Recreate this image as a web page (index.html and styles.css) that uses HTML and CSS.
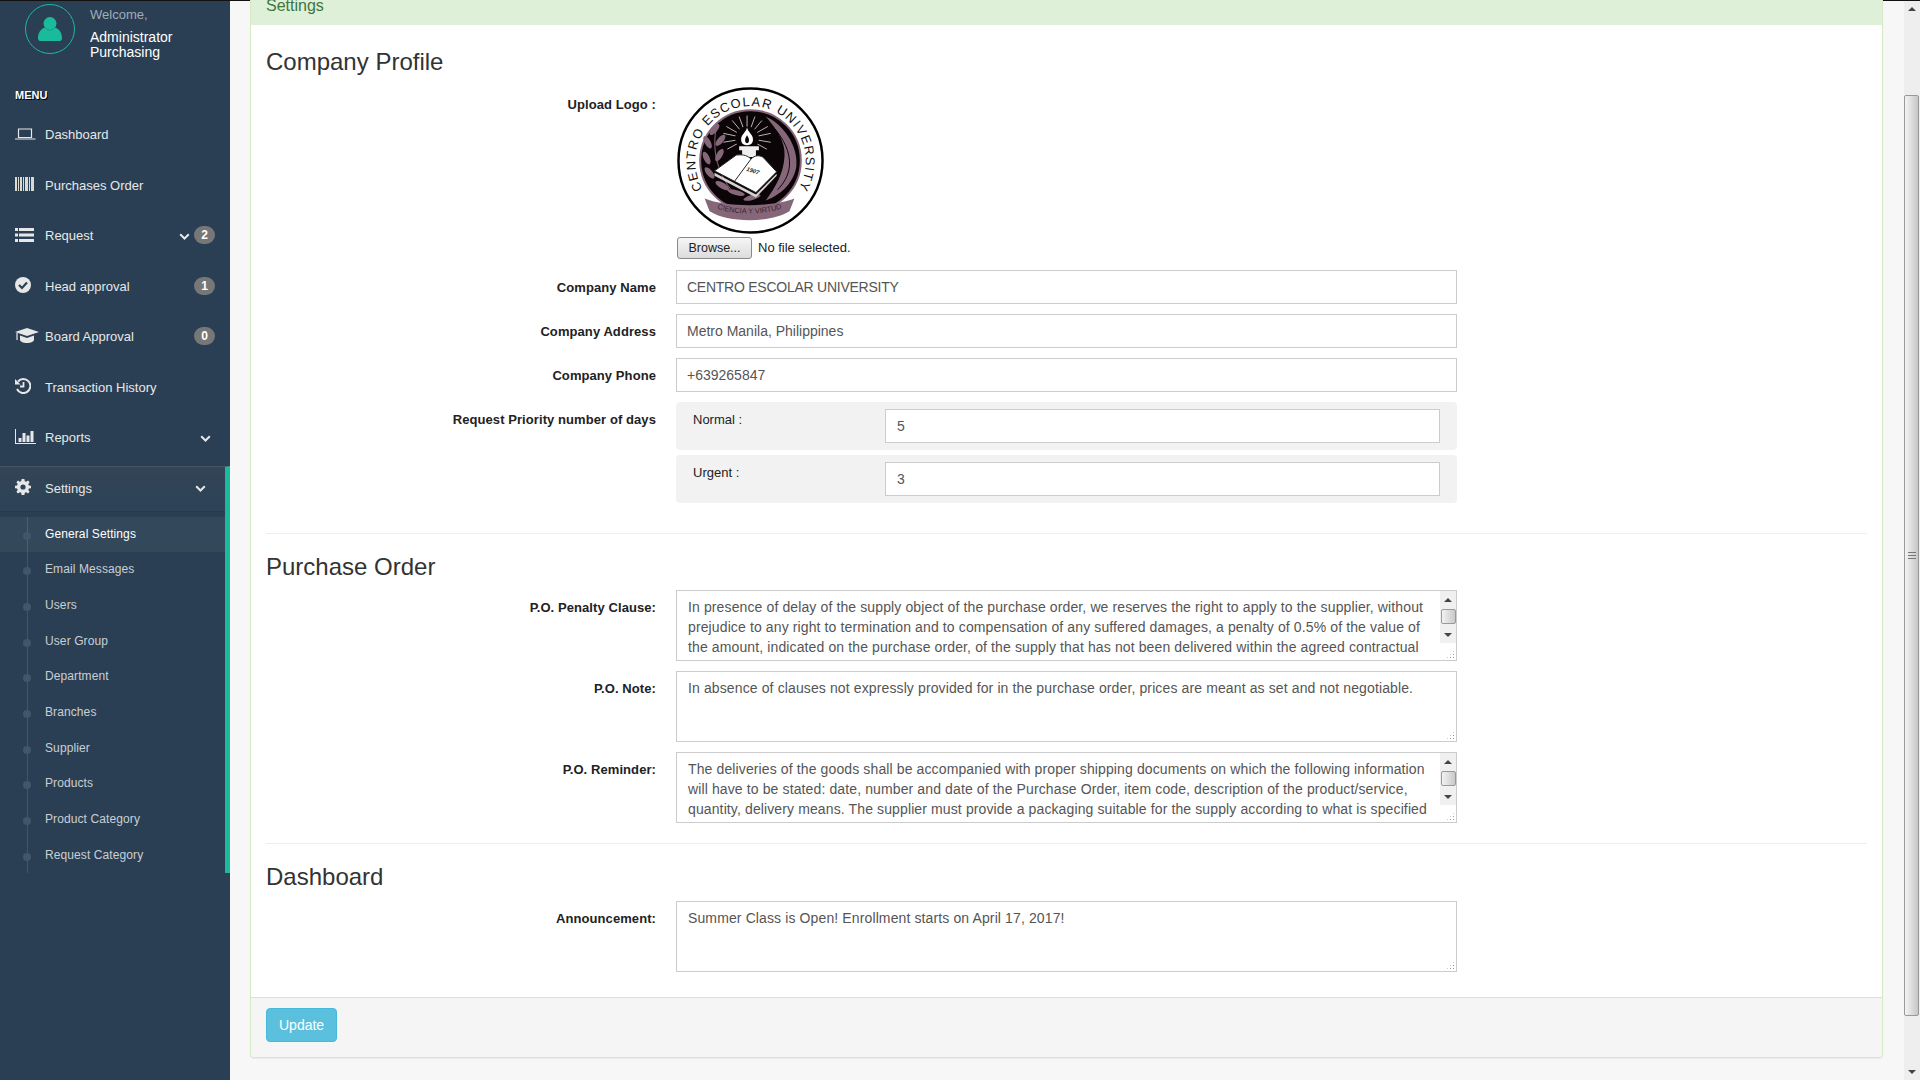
FILE: index.html
```html
<!DOCTYPE html>
<html lang="en">
<head>
	<meta charset="utf-8" />
	<title>General Settings</title>
	<link rel="stylesheet" href="styles.css">
</head>
<body>
<div class="page">

	<!-- left menu -->
	<aside class="sidebar">
		<div class="profile">
			<div class="avatar">
				<svg width="24" height="24" viewBox="0 0 24 24"><circle cx="12" cy="6.500" r="6.500" fill="#1ABB9C"/><path d="M0 21.500C0 16 2 12.500 7 10.500 10 14 14 14 17 10.500 22 12.500 24 16 24 21.500 24 23 23 24 22 24H2C1 24 0 23 0 21.500z" fill="#1ABB9C"/></svg>
			</div>
			<div class="profile-text">
				<span class="welcome">Welcome,</span>
				<h2>Administrator<br>Purchasing</h2>
			</div>
		</div>
		<h3 class="menu-title">MENU</h3>
		<ul class="nav">
			<li class="nav-row"><span class="nav-icon"><svg width="21" height="12" viewBox="0 0 21 12"><path d="M3.500 1h13v8.500h-13z" fill="none" stroke="#E7E7E7" stroke-width="1.200"/><path d="M0 10.500h20.500v1H0z" fill="#E7E7E7"/></svg></span>Dashboard</li>
			<li class="nav-row"><span class="nav-icon"><svg width="19" height="14" viewBox="0 0 19 14"><path d="M0 0h2v14H0zM3 0h1v14H3zM5 0h2v14H5zM8 0h1v14H8zM10 0h3v14h-3zM14 0h1v14h-1zM16 0h3v14h-3z" fill="#d9d9d0"/></svg></span>Purchases Order</li>
			<li class="nav-row"><span class="nav-icon"><svg width="19" height="14" viewBox="0 0 19 14"><path d="M0 0h3v3H0zM4 0h15v3H4zM0 5.500h3v3H0zM4 5.500h15v3H4zM0 11h3v3H0zM4 11h15v3H4z" fill="#E7E7E7"/></svg></span>Request
				<span class="nav-end"><svg class="chev" width="11" height="7" viewBox="0 0 11 7"><path d="M1.200 1.200 5.500 5.500 9.800 1.200" fill="none" stroke="#E7E7E7" stroke-width="2"/></svg><span class="badge">2</span></span></li>
			<li class="nav-row"><span class="nav-icon"><svg width="16" height="16" viewBox="0 0 16 16"><circle cx="8" cy="8" r="8" fill="#E7E7E7"/><path d="M4 8l3 3 5-5.500" fill="none" stroke="#2A3F54" stroke-width="2.200"/></svg></span>Head approval
				<span class="nav-end"><span class="badge">1</span></span></li>
			<li class="nav-row"><span class="nav-icon"><svg width="24" height="16" viewBox="0 0 24 16"><path d="M0 4 12 0l12 4-12 4z" fill="#E7E7E7"/><path d="M5 7.500 12 10l7-2.500v4.200C19 13.500 16 15 12 15s-7-1.500-7-3.300z" fill="#E7E7E7"/><path d="M2 5v7" stroke="#E7E7E7" stroke-width="1.200"/></svg></span>Board Approval
				<span class="nav-end"><span class="badge">0</span></span></li>
			<li class="nav-row"><span class="nav-icon"><svg width="16" height="16" viewBox="0 0 16 16"><path d="M3 3.500A7 7 0 1 1 2 11" fill="none" stroke="#E7E7E7" stroke-width="2"/><path d="M0 1v5.500h5.500z" fill="#E7E7E7"/><path d="M8.500 4v4.500H5" fill="none" stroke="#E7E7E7" stroke-width="1.800"/></svg></span>Transaction History</li>
			<li class="nav-row"><span class="nav-icon"><svg width="21" height="15" viewBox="0 0 21 15"><path d="M0 0h1v14h20v1H0z" fill="#E7E7E7"/><path d="M3.500 9h3v4h-3zM7.500 4h3v9h-3zM11.500 6.500h3V13h-3zM15.500 2h3v11h-3z" fill="#E7E7E7"/></svg></span>Reports
				<span class="nav-end chev-only"><svg class="chev" width="11" height="7" viewBox="0 0 11 7"><path d="M1.200 1.200 5.500 5.500 9.800 1.200" fill="none" stroke="#E7E7E7" stroke-width="2"/></svg></span></li>
			<li class="nav-active">
				<div class="nav-row active-head"><span class="nav-icon"><svg width="16" height="16" viewBox="0 0 16 16"><path d="M6.600 0h2.800l.4 2.200 1.400.6L13 1.500l1.600 1.700-1.300 1.800.6 1.400L16 6.800v2.400l-2.100.4-.6 1.400 1.300 1.800-1.600 1.700-1.800-1.300-1.400.6-.4 2.200H6.600l-.4-2.200-1.400-.6L3 14.500l-1.600-1.700 1.300-1.800-.6-1.400L0 9.200V6.800l2.100-.4.600-1.400-1.300-1.800L3 1.500l1.800 1.300 1.400-.6z" fill="#E7E7E7"/><circle cx="8" cy="8" r="2.600" fill="#2f4255"/></svg></span>Settings
					<span class="nav-end chev-active"><svg class="chev" width="11" height="7" viewBox="0 0 11 7"><path d="M1.200 1.200 5.500 5.500 9.800 1.200" fill="none" stroke="#E7E7E7" stroke-width="2"/></svg></span></div>
				<ul class="child-menu">
					<li class="current">General Settings</li>
					<li>Email Messages</li>
					<li>Users</li>
					<li>User Group</li>
					<li>Department</li>
					<li>Branches</li>
					<li>Supplier</li>
					<li>Products</li>
					<li>Product Category</li>
					<li>Request Category</li>
				</ul>
			</li>
		</ul>
	</aside>

	<!-- settings panel -->
	<main class="content">
		<section class="panel">
			<div class="panel-heading">Settings</div>
			<div class="panel-body">
				<h3 class="section-title">Company Profile</h3>

				<div class="form-row logo-row">
					<label>Upload Logo :</label>
					<div>
						<svg class="logo" width="148" height="148" viewBox="0 0 150 150">
							<defs>
								<path id="sealArc" d="M27 105A56 56 0 1 1 122 105"/>
								<path id="ribbonArc" d="M33 120C55 131 91 131 114 120"/>
							</defs>
							<circle cx="74.500" cy="74.500" r="73" fill="#fff" stroke="#000" stroke-width="2.500"/>
							<text class="seal-text"><textPath href="#sealArc" startOffset="50%" text-anchor="middle">CENTRO ESCOLAR UNIVERSITY</textPath></text>
							<circle cx="74.500" cy="74.500" r="51" fill="#0b0507" stroke="#86677a" stroke-width="2"/>
							<!-- big leaf on the right -->
							<path d="M90 30C108 38 123 60 121 80 119 96 106 109 90 115 100 101 108 88 109 70 110 55 100 42 90 30z" fill="#86677a"/>
							<path d="M97 40C108 52 115 66 114 80 113 90 108 98 102 104" fill="none" stroke="#0b0507"/>
							<!-- laurel on the left -->
							<g fill="#86677a">
								<ellipse cx="38" cy="43" rx="7" ry="3" transform="rotate(-50 38 43)"/>
								<ellipse cx="31" cy="56" rx="7" ry="3" transform="rotate(60 31 56)"/>
								<ellipse cx="44" cy="54" rx="7" ry="3" transform="rotate(-50 44 54)"/>
								<ellipse cx="30" cy="72" rx="7" ry="3" transform="rotate(65 30 72)"/>
								<ellipse cx="43" cy="69" rx="7" ry="3" transform="rotate(-60 43 69)"/>
								<ellipse cx="33" cy="87" rx="7" ry="3" transform="rotate(50 33 87)"/>
								<ellipse cx="46" cy="100" rx="8" ry="3" transform="rotate(30 46 100)"/>
								<ellipse cx="60" cy="107" rx="9" ry="2.500" transform="rotate(15 60 107)"/>
								<ellipse cx="76" cy="112" rx="9" ry="2.500" transform="rotate(-15 76 112)"/>
							</g>
							<path d="M40 40C36 60 38 85 58 108" fill="none" stroke="#86677a"/>
							<!-- torch -->
							<g stroke="#e8e0e0" stroke-width=".8">
								<path d="M71 52V29M71 52 63 30M71 52 79 30M71 52 56 34M71 52 86 34M71 52 50 40M71 52 92 40M71 52 47 47M71 52 95 47M71 52 47 56M71 52 95 56M71 52 51 63M71 52 91 63"/>
							</g>
							<circle cx="71" cy="52" r="12" fill="#0b0507"/>
							<path d="M71 41c1 5 6 7 6 12 0 4-2 6-6 6s-6-2-6-6c0-5 5-7 6-12z" fill="#fff"/>
							<path d="M71 49c1 2 2 3 2 5s-1 3-2 3-2-1-2-3 1-3 2-5z" fill="#0b0507"/>
							<path d="M63 60h20v4h-3v7H66v-7h-3z" fill="#eee"/>
							<!-- book -->
							<path d="M38 85 60 69C68 68 72 70 75 73 79 69 83 69 87 71L101 86 80 107z" fill="#fff" stroke="#222"/>
							<path d="M75 73 58 96" stroke="#222" fill="none"/>
							<path d="M38 87 80 109 101 88V90L80 112 38 90z" fill="#d8d2d2"/>
							<text class="book-year" transform="translate(70 85) rotate(17)">1907</text>
							<!-- ribbon -->
							<path d="M28 113C50 122 96 122 119 113L114 126C94 138 52 138 33 126z" fill="#86677a"/>
							<text class="ribbon-text"><textPath href="#ribbonArc" startOffset="50%" text-anchor="middle">CIENCIA Y VIRTUD</textPath></text>
						</svg>
						<div class="file-line"><button class="browse" type="button">Browse...</button><span>No file selected.</span></div>
					</div>
				</div>

				<div class="form-row">
					<label>Company Name</label>
					<input class="text-input caps" type="text" value="CENTRO ESCOLAR UNIVERSITY">
				</div>
				<div class="form-row">
					<label>Company Address</label>
					<input class="text-input" type="text" value="Metro Manila, Philippines">
				</div>
				<div class="form-row">
					<label>Company Phone</label>
					<input class="text-input" type="text" value="+639265847">
				</div>
				<div class="form-row priority-row">
					<label>Request Priority number of days</label>
					<div class="priority-list">
						<div class="priority-box">
							<span class="priority-label">Normal :</span>
							<input class="text-input" type="text" value="5">
						</div>
						<div class="priority-box">
							<span class="priority-label">Urgent :</span>
							<input class="text-input" type="text" value="3">
						</div>
					</div>
				</div>

				<hr>
				<h3 class="section-title">Purchase Order</h3>

				<div class="form-row">
					<label>P.O. Penalty Clause:</label>
					<div class="area-wrap">
						<textarea class="text-area">In presence of delay of the supply object of the purchase order, we reserves the right to apply to the supplier, without prejudice to any right to termination and to compensation of any suffered damages, a penalty of 0.5% of the value of the amount, indicated on the purchase order, of the supply that has not been delivered within the agreed contractual terms, for each day of delay.</textarea>
						<div class="area-scroll"><span class="arrow-up"></span><div class="area-thumb"></div><span class="arrow-down"></span></div>
					</div>
				</div>
				<div class="form-row">
					<label>P.O. Note:</label>
					<div class="area-wrap">
						<textarea class="text-area">In absence of clauses not expressly provided for in the purchase order, prices are meant as set and not negotiable.</textarea>
					</div>
				</div>
				<div class="form-row last-row">
					<label>P.O. Reminder:</label>
					<div class="area-wrap">
						<textarea class="text-area">The deliveries of the goods shall be accompanied with proper shipping documents on which the following information will have to be stated: date, number and date of the Purchase Order, item code, description of the product/service, quantity, delivery means. The supplier must provide a packaging suitable for the supply according to what is specified in the order.</textarea>
						<div class="area-scroll"><span class="arrow-up"></span><div class="area-thumb"></div><span class="arrow-down"></span></div>
					</div>
				</div>

				<hr class="hr-tight">
				<h3 class="section-title">Dashboard</h3>

				<div class="form-row last-row announce-row">
					<label>Announcement:</label>
					<div class="area-wrap">
						<textarea class="text-area">Summer Class is Open! Enrollment starts on April 17, 2017!</textarea>
					</div>
				</div>
			</div>
			<div class="panel-footer">
				<button class="btn-update" type="button">Update</button>
			</div>
		</section>
	</main>

	<!-- window scrollbar, the page is shown part way down -->
	<div class="win-scroll">
		<span class="arrow-up"></span>
		<div class="win-track"><div class="win-thumb"><i></i></div></div>
		<span class="arrow-down"></span>
	</div>
</div>
</body>
</html>
```

FILE: styles.css
```css
*{
	box-sizing: border-box;
}

html, body{
	margin: 0;
	padding: 0;
	height: 100%;
	overflow: hidden;
}

body{
	font: 13px/20px "Liberation Sans", Arial, sans-serif;
	color: #333;
	background: #f7f7f7;
}

.page{
	display: flex;
	height: 1080px;
	border-top: 1px solid #111;
}

/* sidebar */
.sidebar{
	width: 230px;
	flex: none;
	background: #2A3F54;
	color: #E7E7E7;
}

.profile{
	display: flex;
	height: 83px;
	padding: 3px 0 0 25px;
}

.avatar{
	width: 50px;
	height: 50px;
	border: 1px solid #1ABB9C;
	border-radius: 50%;
	display: flex;
	align-items: center;
	justify-content: center;
	flex: none;
}

.profile-text{
	margin: 1px 0 0 15px;
}

.welcome{
	display: block;
	color: #a3acb4;
	font-size: 13px;
	line-height: 20px;
}

.profile-text h2{
	margin: 5px 0 0;
	font-size: 14px;
	line-height: 15px;
	font-weight: normal;
	color: #fff;
}

.menu-title{
	margin: 0 0 4px;
	padding-left: 15px;
	font-size: 11px;
	line-height: 22px;
	font-weight: bold;
	color: #fff;
	text-shadow: 1px 1px #000;
}

.nav, .child-menu{
	list-style: none;
	margin: 0;
	padding: 0;
}

.nav-row{
	display: flex;
	align-items: center;
	height: 50.5px;
	padding-left: 15px;
	font-size: 13px;
	position: relative;
}

.nav-icon{
	width: 30px;
	flex: none;
	display: flex;
	align-items: center;
	margin-top: -3px;
}

.nav-end{
	margin-left: auto;
	padding-right: 15px;
	display: flex;
	align-items: center;
	gap: 4px;
}

.chev-only{
	padding-right: 19px;
}

.chev-active{
	padding-right: 19px;
}

.badge{
	width: 21px;
	height: 18px;
	border-radius: 9px;
	background: #777;
	color: #fff;
	font-size: 12px;
	line-height: 18px;
	font-weight: bold;
	text-align: center;
	margin-top: -2px;
}

.nav-active{
	margin-top: 2px;
	border-top: 1px solid #425668;
	border-right: 5px solid #1ABB9C;
}

.active-head{
	height: 45px;
	background: linear-gradient(#334556, #2C4257);
	border-bottom: 1px solid #253a4e;
}

.child-menu{
	position: relative;
	padding-top: 5px;
}

/* the line down the submenu */
.child-menu:before{
	content: "";
	position: absolute;
	left: 27px;
	top: 5px;
	bottom: 0;
	width: 1px;
	background: #425668;
}

.child-menu li{
	position: relative;
	height: 35.7px;
	line-height: 35px;
	padding-left: 45px;
	font-size: 12px;
	letter-spacing: 0.1px;
	color: rgba(255,255,255,0.75);
}

.child-menu li:before{
	content: "";
	position: absolute;
	left: 23px;
	top: 15px;
	width: 8px;
	height: 8px;
	border-radius: 50%;
	background: #425668;
}

.child-menu li.current{
	background: rgba(255,255,255,0.05);
	color: #fff;
}

/* main panel */
.content{
	flex: 1;
	min-width: 0;
	padding: 0 21px 0 20px;
}

.panel{
	background: #fff;
	border: 1px solid #d6e9c6;
	border-top: 0;
	border-radius: 0 0 4px 4px;
	box-shadow: 0 1px 1px rgba(0,0,0,0.05);
}

.panel-heading{
	height: 28px;
	background: #dff0d8;
	color: #3c763d;
	font-size: 16px;
	line-height: 18px;
	padding: 0 15px;
	margin-top: -4px;
}

.panel-body{
	padding: 23px 15px 25px;
}

.section-title{
	margin: 0 0 10px;
	padding-top: 1px;
	font-size: 24px;
	line-height: 26px;
	font-weight: normal;
	color: #333;
}

.form-row{
	display: grid;
	grid-template-columns: 390px 781px;
	column-gap: 20px;
	margin-bottom: 10px;
}

.form-row label{
	text-align: right;
	font-weight: bold;
	font-size: 13px;
	letter-spacing: 0.08px;
	line-height: 20px;
	padding-top: 8px;
	color: #222;
}

.logo-row{
	margin-top: 11px;
	margin-bottom: 11px;
}

.logo-row label{
	padding-top: 9px;
}

.logo{
	display: block;
	margin: 1px 0 0 1px;
}

.seal-text{
	font: 13px "Liberation Sans", Arial, sans-serif;
	letter-spacing: 1.300px;
	fill: #111;
}

.book-year{
	font: italic bold 6px "Liberation Sans", Arial, sans-serif;
	fill: #222;
}

.ribbon-text{
	font: 7.500px "Liberation Sans", Arial, sans-serif;
	fill: #3a2430;
}

.file-line{
	display: flex;
	align-items: center;
	margin-top: 2px;
	font-size: 13px;
	color: #222;
	padding-left: 1px;
}

.browse{
	width: 75px;
	height: 22px;
	padding: 0;
	margin-right: 6px;
	font: 12.500px "Liberation Sans", Arial, sans-serif;
	color: #222;
	border: 1px solid #888;
	border-radius: 3px;
	background: linear-gradient(#f6f6f6, #dcdcdc);
}

.text-input{
	display: block;
	width: 100%;
	height: 34px;
	padding: 6px 10px;
	border: 1px solid #ccc;
	font: 14px/20px "Liberation Sans", Arial, sans-serif;
	color: #555;
	background: #fff;
	outline: none;
}

.caps{
	letter-spacing: -0.25px;
}

.priority-row{
	margin-bottom: 0;
}

.priority-list{
	display: flex;
	flex-direction: column;
	gap: 5px;
}

.priority-box{
	display: flex;
	height: 48px;
	padding: 7px 17px 0;
	background: #f2f2f2;
	border-radius: 4px;
}

.priority-box .text-input{
	padding-left: 11px;
}

.priority-label{
	width: 192px;
	flex: none;
	font-size: 13px;
	line-height: 20px;
	padding-top: 1px;
	color: #222;
}

hr{
	margin: 30px 0 19px;
	border: 0;
	border-top: 1px solid #eee;
}

hr.hr-tight{
	margin-top: 20px;
}

.last-row{
	margin-bottom: 0;
}

.announce-row{
	margin-top: 11px;
}

.area-wrap{
	position: relative;
	height: 71px;
}

.text-area{
	display: block;
	width: 100%;
	height: 71px;
	padding: 6px 26px 6px 11px;
	border: 1px solid #ccc;
	font: 14px/20px "Liberation Sans", Arial, sans-serif;
	letter-spacing: 0.12px;
	color: #555;
	background: #fff;
	outline: none;
	resize: none;
	overflow: hidden;
}

/* resize grip in the corner */
.area-wrap:after{
	content: "";
	position: absolute;
	right: 2px;
	bottom: 2px;
	width: 9px;
	height: 9px;
	background: radial-gradient(circle, #999 0.7px, transparent 1px) 0 0/3px 3px;
	clip-path: polygon(100% 0, 100% 100%, 0 100%);
}

/* textarea scrollbar, drawn over the field */
.area-scroll{
	position: absolute;
	top: 1px;
	right: 1px;
	width: 16px;
	height: 52px;
	background: #f0f0f0;
	display: flex;
	flex-direction: column;
	align-items: center;
}

.area-scroll .arrow-up{
	margin: 7px 0 7px;
}

.area-scroll .arrow-down{
	margin: 9px 0 0;
}

.area-thumb{
	width: 15px;
	height: 15px;
	flex: none;
	border: 1px solid #999;
	border-radius: 2px;
	background: linear-gradient(90deg, #f2f2f2, #c9c9c9);
}

.panel-footer{
	background: #f5f5f5;
	border-top: 1px solid #ddd;
	padding: 10px 15px 15px;
	border-radius: 0 0 3px 3px;
}

.btn-update{
	display: block;
	height: 34px;
	padding: 6px 12px;
	font: 14px/20px "Liberation Sans", Arial, sans-serif;
	color: #fff;
	background: #5bc0de;
	border: 1px solid #46b8da;
	border-radius: 4px;
}

/* window scrollbar */
.win-scroll{
	width: 16px;
	flex: none;
	background: #eee;
	display: flex;
	flex-direction: column;
	align-items: center;
}

.win-track{
	flex: 1;
	width: 100%;
	padding: 78px 1px 48px 0;
	display: flex;
}

.win-thumb{
	width: 100%;
	border: 1px solid #999;
	border-radius: 2px;
	background: linear-gradient(90deg, #f4f4f4, #c6c6c6);
	display: flex;
	align-items: center;
	justify-content: center;
}

.win-thumb i{
	display: block;
	width: 8px;
	height: 7px;
	border-top: 1px solid #777;
	border-bottom: 1px solid #777;
	background: linear-gradient(#777, #777) center/100% 1px no-repeat;
}

.arrow-up, .arrow-down{
	width: 0;
	height: 0;
	flex: none;
	border-left: 4px solid transparent;
	border-right: 4px solid transparent;
	margin: 6px 0;
}

.arrow-up{
	border-bottom: 4px solid #444;
}

.arrow-down{
	border-top: 4px solid #444;
}
```
